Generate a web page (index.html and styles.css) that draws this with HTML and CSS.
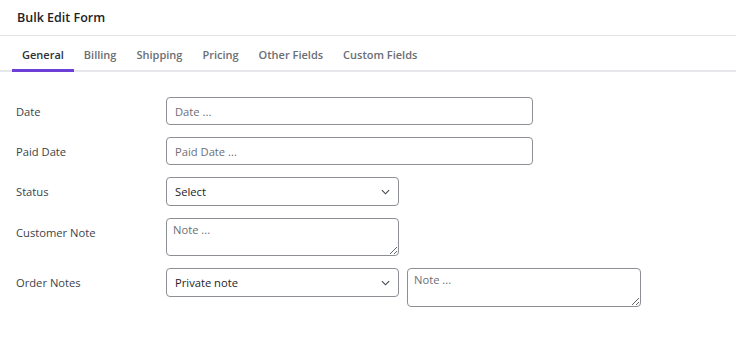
FILE: index.html
```html
<!DOCTYPE html>
<html lang="en">
<head>
    <meta charset="UTF-8">
    <meta name="viewport" content="width=device-width, initial-scale=1.0">
    <title>Bulk Edit Form</title>
    <link rel="stylesheet" href="styles.css">
</head>
<body>
    <div class="bulk-edit">
        <div class="header">Bulk Edit Form</div>

        <div class="tabs">
            <div class="tab active">General</div>
            <div class="tab">Billing</div>
            <div class="tab">Shipping</div>
            <div class="tab">Pricing</div>
            <div class="tab">Other Fields</div>
            <div class="tab">Custom Fields</div>
        </div>

        <div class="form">
            <div class="row">
                <label class="label">Date</label>
                <input type="text" class="field wide" placeholder="Date ...">
            </div>
            <div class="row">
                <label class="label">Paid Date</label>
                <input type="text" class="field wide" placeholder="Paid Date ...">
            </div>
            <div class="row">
                <label class="label">Status</label>
                <div class="select-wrap">
                    <select class="field select">
                        <option>Select</option>
                    </select>
                    <svg class="chevron" viewBox="0 0 10 6"><path d="M1 1l4 4 4-4" fill="none" stroke="#3c434a" stroke-width="1.2"/></svg>
                </div>
            </div>
            <div class="row">
                <label class="label">Customer Note</label>
                <textarea class="field note" placeholder="Note ..."></textarea>
            </div>
            <div class="row">
                <label class="label">Order Notes</label>
                <div class="select-wrap">
                    <select class="field select">
                        <option>Private note</option>
                    </select>
                    <svg class="chevron" viewBox="0 0 10 6"><path d="M1 1l4 4 4-4" fill="none" stroke="#3c434a" stroke-width="1.2"/></svg>
                </div>
                <textarea class="field note tall" placeholder="Note ..."></textarea>
            </div>
        </div>
    </div>
</body>
</html>
```

FILE: styles.css
```css
* {
    margin: 0;
    padding: 0;
    box-sizing: border-box;
}

body {
    font-family: 'Open Sans', 'Noto Sans', sans-serif;
    background: white;
    color: #1d2327;
}

.header {
    height: 36px;
    padding: 0 17px;
    display: flex;
    align-items: center;
    font-size: 12.5px;
    font-weight: 600;
    border-bottom: 1px solid #e2e4e7;
}

.tabs {
    display: flex;
    padding: 0 12px;
    border-bottom: 2px solid #e6e7ea;
}

.tab {
    padding: 0 10px;
    height: 36px;
    display: flex;
    align-items: center;
    font-size: 11px;
    font-weight: 600;
    color: #6a6e73;
    margin-bottom: -2px;
}

.tab.active {
    color: #2c3338;
    border-bottom: 3px solid #6c3fd6;
    padding-top: 3px;
}

.form {
    padding: 25px 0 0 16px;
    display: flex;
    flex-direction: column;
    gap: 12px;
}

.row {
    display: flex;
    align-items: flex-start;
    gap: 8px;
}

.label {
    width: 142px;
    padding-top: 2px;
    line-height: 26px;
    font-size: 11.2px;
    color: #3c434a;
}

.field {
    font-family: inherit;
    font-size: 11.2px;
    color: #1d2327;
    border: 1px solid #8c8f94;
    border-radius: 4px;
    background: white;
    outline: none;
}

.field::placeholder {
    color: #6b6f75;
}

.wide {
    width: 367px;
    height: 28px;
    padding: 0 8px;
}

.select-wrap {
    position: relative;
}

.select {
    width: 233px;
    height: 29px;
    padding: 0 8px;
    appearance: none;
    display: block;
}

.chevron {
    position: absolute;
    right: 9px;
    top: 12px;
    width: 9px;
    height: 6px;
}

.note {
    width: 233px;
    height: 38px;
    padding: 3px 6px;
    resize: vertical;
}

.tall {
    width: 234px;
    height: 39px;
}
```
